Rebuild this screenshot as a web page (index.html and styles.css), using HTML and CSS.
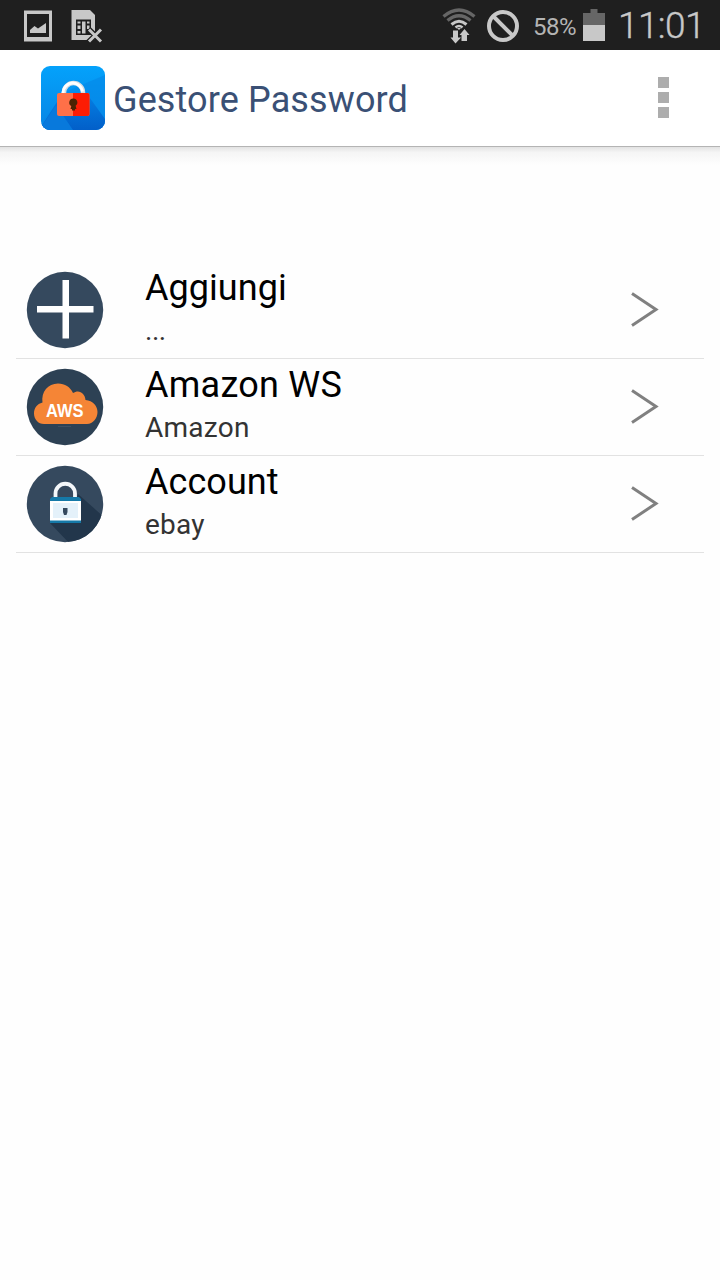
FILE: index.html
```
<!DOCTYPE html>
<html lang="it">
<head>
<meta charset="utf-8">
<title>Gestore Password</title>
<link rel="stylesheet" href="styles.css">
</head>
<body>
<div class="status">
  <svg class="status-left" width="104" height="50" viewBox="0 0 104 50">
    <path fill="#c8c8c8" fill-rule="evenodd" d="M24 10.500H52V41.500H24ZM27 14V37H49V14Z"/>
    <path fill="#c8c8c8" d="M30 33V30L34.500 26L38 28.500L46 23V33Z"/>
    <path fill="#c8c8c8" d="M71.500 10H90L95 15V40H71.500Z"/>
    <path fill="#1f1f1f" d="M76 19.500H91V35H76Z"/>
    <path fill="#c8c8c8" d="M77.500 21.500h3v2h-3zM77.500 25.500h3v3.500h-3zM77.500 31h3v2.500h-3zM82 21.500h3.500v12H82zM87 21.500h2.500v2H87zM87 25.500h2.500v3.500H87z"/>
    <path stroke="#1f1f1f" stroke-width="5.500" d="M88.500 29L102 42M102 29L88.500 42"/>
    <path stroke="#c8c8c8" stroke-width="3" d="M89 29.500L101 41.500M101 29.500L89 41.500"/>
  </svg>
  <div class="status-right">
    <svg width="36" height="50" viewBox="442 0 36 50" fill="none">
      <path stroke="#666" stroke-width="3.300" d="M443.500 16.500Q459 3.500 474.500 16.500M447.500 20.500Q459 11 470.500 20.500"/>
      <path stroke="#c8c8c8" stroke-width="3" d="M451.500 24.500Q459 18 466.500 24.500"/>
      <path stroke="#c8c8c8" stroke-width="2.500" d="M455.500 27.500Q459 24.500 462.500 27.500"/>
      <path fill="#c8c8c8" d="M457 28h4l-2 2zM453 30.500h5V37.500H461L455.500 43.500L450.500 37.500H453ZM461.500 41V35H459.500L464.500 29L469.500 35H467V41Z"/>
    </svg>
    <svg class="block" width="34" height="50" viewBox="486 0 34 50" fill="none" stroke="#c8c8c8" stroke-width="4">
      <circle cx="503" cy="26" r="14"/><path d="M493 16L513 36"/>
    </svg>
    <span class="percent">58%</span>
    <svg class="battery" width="22" height="50" viewBox="583 0 22 50">
      <path fill="#666" d="M590.500 9h7v4h7.500v12H583V13h7.500z"/><path fill="#c8c8c8" d="M583 25h22v16h-22z"/>
    </svg>
    <span class="clock">11:01</span>
  </div>
</div>
<header class="bar">
  <svg class="app-icon" width="64" height="64" viewBox="0 0 64 64">
    <defs>
      <linearGradient id="sky" x1="0" y1="0" x2="0" y2="1"><stop offset="0" stop-color="#04a2fb"/><stop offset="1" stop-color="#0784e4"/></linearGradient>
      <linearGradient id="shade" x1="0" y1="0" x2="0" y2="1"><stop offset="0" stop-color="#0480e4"/><stop offset="1" stop-color="#025fc9"/></linearGradient>
      <clipPath id="tile"><rect width="64" height="64" rx="9"/></clipPath>
    </defs>
    <g clip-path="url(#tile)">
      <path fill="url(#sky)" d="M0 0H64V64H0Z"/>
      <path fill="#0588e8" opacity=".65" d="M64 9L24 26L0 58V64H64Z"/>
      <path fill="url(#shade)" d="M16 36L0 61V64H64V53L46 28Z"/>
      <path fill="#0879dc" d="M0 61L15 39L32 64H0Z"/>
    </g>
    <path fill="none" stroke="#d8dde2" stroke-width="4.500" d="M23 28V26.500A9.500 9.500 0 0 1 42 26.500V28"/>
    <path fill="none" stroke="#fff" stroke-width="3" d="M22 28V26.500A9.800 9.800 0 0 1 41.500 25.500"/>
    <rect x="16" y="27" width="32.500" height="23" rx="2" fill="#ff7048"/>
    <path fill="#fc1c04" d="M32 27H46.500a2 2 0 0 1 2 2V48a2 2 0 0 1-2 2H32Z"/>
    <path fill="#4a2303" d="M32.300 32.500a4 4 0 0 1 2.300 7.300L35.500 43H34v1.500H31V43H29.500L30.300 40A4 4 0 0 1 32.300 32.500Z"/>
  </svg>
  <h1 class="title">Gestore Password</h1>
  <div class="menu"><i class="dot"></i><i class="dot"></i><i class="dot"></i></div>
</header>
<div class="shadow"></div>
<main class="list">
  <div class="row">
    <svg class="avatar" width="78" height="78" viewBox="-39 -39 78 78">
      <circle r="38.200" fill="#35495e"/>
      <path fill="#fff" d="M-2.500-30H4V-4H28.500V2.500H4V28.500H-2.500V2.500H-28V-4H-2.500Z"/>
    </svg>
    <div class="text"><div class="name">Aggiungi</div><div class="sub dots">...</div></div>
    <svg class="chevron" width="32" height="40" viewBox="0 0 32 40"><path d="M4 3.500L28 19.500L4 35.500"/></svg>
  </div>
  <div class="row">
    <svg class="avatar" width="78" height="78" viewBox="-39 -39 78 78">
      <circle r="38.200" fill="#2d4154"/>
      <path fill="#f58536" d="M-21 17C-27 17-31 12-31 6.500C-31 1-28-3-22.500-4.500C-24-15-17-23.500-7-23.500C0-23.500 5-20 8-14C14-18 20-14 20.500-7C28-6.500 32.500-1 32.500 5C32.500 11 28 17 22 17Z"/>
      <text class="aws" x="-19" y="9.500" textLength="37.500" lengthAdjust="spacingAndGlyphs">AWS</text>
      <path stroke="#3e5062" d="M-7 19.500H6"/>
    </svg>
    <div class="text"><div class="name ws">Amazon WS</div><div class="sub">Amazon</div></div>
    <svg class="chevron" width="32" height="40" viewBox="0 0 32 40"><path d="M4 3.500L28 19.500L4 35.500"/></svg>
  </div>
  <div class="row">
    <svg class="avatar" width="78" height="78" viewBox="-39 -39 78 78">
      <defs><clipPath id="disc"><circle r="38.200"/></clipPath></defs>
      <circle r="38.200" fill="#35495e"/>
      <path clip-path="url(#disc)" fill="#22364b" d="M13-10L40 14V40H5L-15 19L10 0Z"/>
      <path fill="none" stroke="#f4f7fa" stroke-width="3.800" d="M-9.500-5V-10.500A9.700 9.700 0 0 1 10-10.500V-5"/>
      <path fill="#1579a8" d="M-13-7H14L16-5V19H-15V-5Z"/>
      <path fill="#fff" d="M-15-3H16V16.500H-15Z"/><path fill="#e4f1fa" d="M-12-1H13V14H-12Z"/>
      <path fill="#35495e" d="M-2 4h4.500V8l-1 3h-2.500l-1-3z"/>
    </svg>
    <div class="text"><div class="name">Account</div><div class="sub">ebay</div></div>
    <svg class="chevron" width="32" height="40" viewBox="0 0 32 40"><path d="M4 3.500L28 19.500L4 35.500"/></svg>
  </div>
</main>
</body>
</html>
```
FILE: styles.css
```
body { margin: 0; height: 1280px; background: #fefefe; font-family: Roboto, "Noto Sans", sans-serif; overflow: hidden; }
svg { display: block; flex: none; }
.status { height: 50px; background: #1f1f1f; color: #c8c8c8; display: flex; justify-content: space-between; }
.status-right { display: flex; padding-right: 17px; }
.block { margin-left: 8px; }
.percent { width: 50px; margin-left: 13px; font-size: 24px; line-height: 54px; color: #b4b4b4; letter-spacing: -0.5px; }
.clock { width: 85px; margin-left: 13px; font-size: 37px; font-weight: 300; line-height: 51px; letter-spacing: -0.6px; white-space: nowrap; -webkit-text-stroke: 0.4px #c8c8c8; }
.bar { height: 96px; display: flex; align-items: center; padding: 0 50px 0 41px; border-bottom: 1px solid #b4b4b4; background: #fff; }
.title { flex: 1; margin: 4px 0 0 8px; font-size: 36px; line-height: 42px; font-weight: 400; color: #3a5075; letter-spacing: 0.12px; }
.menu { display: flex; flex-direction: column; gap: 4px; padding-bottom: 1px; }
.dot { width: 11px; height: 11px; margin-right: 1px; background: #adadad; }
.shadow { height: 18px; background: linear-gradient(#e2e2e2, #f5f5f5 30%, #fefefe); }
.list { padding: 97px 16px 0; }
.row { height: 96px; display: flex; align-items: center; border-bottom: 1px solid #e2e2e2; padding: 0 44px 0 10px; }
.text { flex: 1; margin-left: 41px; }
.name { font-size: 36px; line-height: 40px; color: #000; letter-spacing: 0.05px; }
.ws { letter-spacing: 0.25px; }
.sub { margin: 1px 0 -1px; font-size: 28px; line-height: 44px; color: #333; letter-spacing: 0.25px; }
.dots { letter-spacing: -0.5px; }
.chevron path { fill: none; stroke: #808080; stroke-width: 3; }
.aws { font: bold 19px "Liberation Sans", sans-serif; fill: #fff; }
```
